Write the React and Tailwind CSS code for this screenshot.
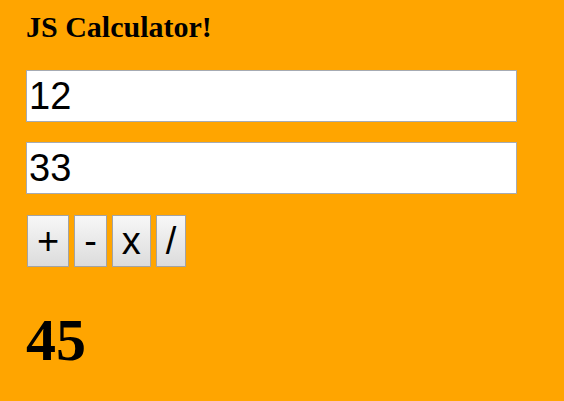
import React, { useState } from "react";

const App = () => {
  const [a, setA] = useState("12");
  const [b, setB] = useState("33");
  const [result, setResult] = useState(45);

  const calc = (op) => {
    const x = parseFloat(a);
    const y = parseFloat(b);
    if (op === "+") setResult(x + y);
    if (op === "-") setResult(x - y);
    if (op === "x") setResult(x * y);
    if (op === "/") setResult(x / y);
  };

  return (
    <div className="min-h-[401px] w-full bg-[#ffa500] pl-[26px] pt-[10px] font-['Liberation_Sans',Arial,sans-serif]">
      {/* Title */}
      <h2 className="font-['Liberation_Serif','Times_New_Roman',serif] text-[30px] leading-[34px] font-bold text-black">
        JS Calculator!
      </h2>

      {/* Inputs */}
      <input
        type="text"
        value={a}
        onChange={(e) => setA(e.target.value)}
        className="mt-[26px] block h-[52px] w-[491px] border border-[#a6abb3] bg-white px-[2px] text-[38px] text-black outline-none"
      />
      <input
        type="text"
        value={b}
        onChange={(e) => setB(e.target.value)}
        className="mt-[20px] block h-[52px] w-[491px] border border-[#a6abb3] bg-white px-[2px] text-[38px] text-black outline-none"
      />

      {/* Operator buttons */}
      <div className="mt-[21px] ml-px flex gap-[5px]">
        {["+", "-", "x", "/"].map((op) => (
          <button
            key={op}
            onClick={() => calc(op)}
            className="h-[52px] border border-[#a3a3a3] bg-gradient-to-b from-[#f7f7f7] to-[#dcdcdc] px-[9px] text-[38px] leading-none text-black"
          >
            {op}
          </button>
        ))}
      </div>

      {/* Result */}
      <h1 className="mt-[38px] font-['Liberation_Serif','Times_New_Roman',serif] text-[60px] leading-[70px] font-bold text-black">
        {result}
      </h1>
    </div>
  );
};

export default App;
